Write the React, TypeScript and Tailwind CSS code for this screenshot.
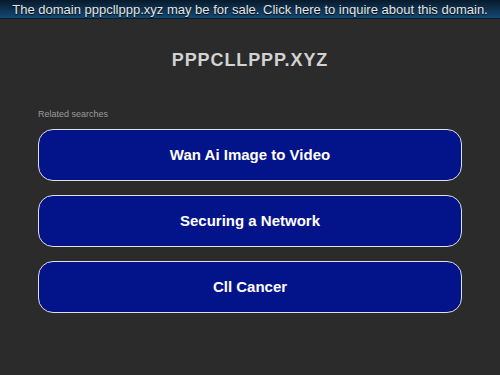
import React from "react";

export default function App() {
  const items = ["Wan Ai Image to Video", "Securing a Network", "Cll Cancer"];
  return (
    <div className="w-[500px] h-[375px] bg-[#2b2b2b] overflow-hidden" style={{ fontFamily: '"Liberation Sans", Arial, sans-serif' }}>
      <div className="h-[19px] bg-gradient-to-b from-[#081a2b] to-[#124a75] border-b border-[#0a1c2c] flex items-center justify-center whitespace-nowrap text-[13px] tracking-normal text-[#e6e6e6] leading-none [text-shadow:0_1px_1px_#000]">
        The domain pppcllppp.xyz may be for sale. Click here to inquire about this domain.
      </div>
      <div className="pt-[31px] text-center text-[18px] font-bold tracking-[0.9px] text-[#d2d2d2] leading-[20px]">
        PPPCLLPPP.XYZ
      </div>
      <div className="px-[38px] pt-[38px]">
        <div className="text-[9px] text-[#9a9a9a] leading-[12px]">Related searches</div>
        <div className="mt-[9px] flex flex-col gap-[14px]">
          {items.map((t) => (
            <div
              key={t}
              className="h-[52px] rounded-[15px] border-[1.5px] border-[#e0e0e0] bg-[#03138a] flex items-center justify-center text-white font-bold text-[15px]"
            >
              {t}
            </div>
          ))}
        </div>
      </div>
    </div>
  );
}
